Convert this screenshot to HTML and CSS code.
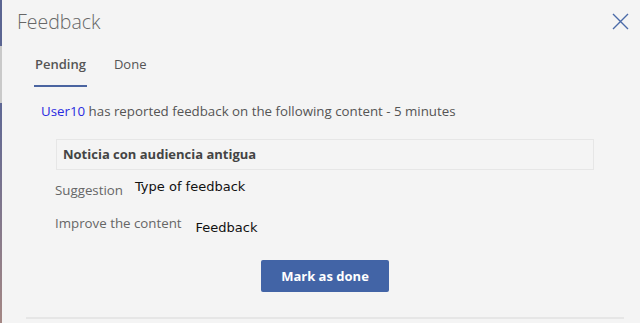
FILE: index.html
```html
<!DOCTYPE html>
<html>
<head>
<meta charset="utf-8">
<link rel="stylesheet" href="styles.css">
</head>
<body>
<div class="page">
  <div class="backdrop">
    <div class="bd-a"></div>
    <div class="bd-b"></div>
    <div class="bd-c"></div>
  </div>
  <div class="dialog">
    <div class="header">
      <h1 class="title">Feedback</h1>
      <button class="close" aria-label="Close">
        <svg width="17" height="17" viewBox="0 0 17 17"><path d="M1 1 L16 16 M16 1 L1 16" stroke="#4a6aa8" stroke-width="1.4" fill="none"/></svg>
      </button>
    </div>
    <div class="tabs">
      <div class="tab active">Pending</div>
      <div class="tab">Done</div>
    </div>
    <div class="body">
      <p class="report"><span class="user">User10</span> has reported feedback on the following content - 5 minutes</p>
      <div class="content-box">Noticia con audiencia antigua</div>
      <div class="row row1"><span class="label">Suggestion</span><span class="value">Type of feedback</span></div>
      <div class="row row2"><span class="label">Improve the content</span><span class="value v2">Feedback</span></div>
      <div class="actions"><button class="done">Mark as done</button></div>
    </div>
    <div class="footer-line"></div>
  </div>
</div>
</body>
</html>
```
FILE: styles.css
```css
html, body { margin: 0; padding: 0; }
body { width: 640px; height: 323px; overflow: hidden; background: #f4f4f4; font-family: "Open Sans", "Noto Sans", sans-serif; }
.page { display: flex; height: 323px; }
.backdrop { width: 2px; display: flex; flex-direction: column; flex: none; }
.bd-a { height: 46px; background: #5b6592; }
.bd-b { height: 57px; background: #c9c9c9; }
.bd-c { flex: 1; background: linear-gradient(#5e6794, #a48784); }
.dialog { flex: 1; display: flex; flex-direction: column; }
.header { display: flex; justify-content: space-between; align-items: flex-start; padding: 8px 11px 0 15px; }
.title { margin: 0; font-family: "Open Sans", sans-serif; font-weight: 300; font-size: 19.5px; color: #666; line-height: 28px; }
.close { border: 0; background: none; padding: 0; margin-top: 5px; width: 17px; height: 17px; }
.close svg { display: block; }
.tabs { display: flex; padding: 19px 0 0 32px; gap: 26px; }
.tab { font-size: 13px; color: #555; padding: 0 1px 12px; line-height: 18px; border-bottom: 2px solid transparent; }
.tab.active { font-weight: 600; border-bottom-color: #4a64a0; }
.body { padding: 15px 0 0 39px; }
.report { margin: 0; font-size: 13.3px; color: #555; line-height: 18px; }
.user { color: #2a2ae0; }
.content-box { margin: 19px 46px 0 15px; height: 29px; border: 1px solid #e6e6e6; padding-left: 6px; font-weight: 700; font-size: 13px; line-height: 29px; color: #444; box-sizing: content-box; }
.row { display: flex; align-items: flex-start; margin-left: 14px; }
.row1 { margin-top: 11px; }
.row2 { margin-top: 15px; }
.label { font-size: 13.3px; color: #666; line-height: 18px; }
.value { font-family: "DejaVu Sans", sans-serif; font-size: 13px; color: #111; margin-left: 12px; line-height: 16px; margin-top: -2px; }
.v2 { margin-left: 14px; margin-top: 6px; }
.actions { display: flex; justify-content: center; margin: 24px 0 0 -39px; padding-left: 0; }
.done { width: 128px; height: 32px; border: 0; border-radius: 2px; background: #4264a6; color: #fff; font-family: "Open Sans", sans-serif; font-weight: 700; font-size: 13px; margin-left: 8px; }
.footer-line { margin: auto 16px 4px 24px; height: 2px; background: #e6e6e6; }
```
